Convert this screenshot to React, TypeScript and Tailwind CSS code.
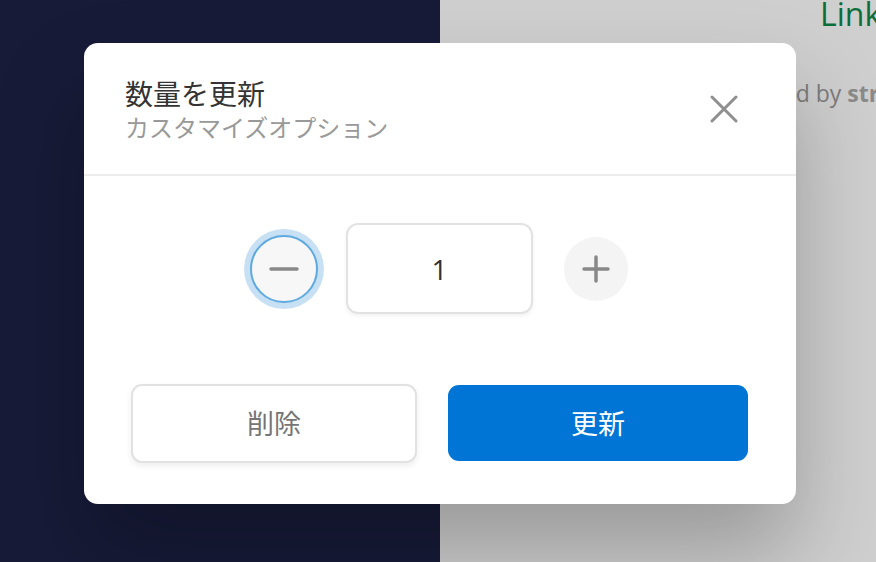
import React, { useState } from 'react';

const jp = { fontFamily: '"Noto Sans CJK JP", "Noto Sans", sans-serif' };
const latin = { fontFamily: '"Open Sans", sans-serif' };

export default function App() {
  const [qty, setQty] = useState(1);

  return (
    <div className="relative w-[876px] h-[562px] overflow-hidden flex" style={jp}>
      {/* Page behind the overlay */}
      <div className="w-[440px] shrink-0 h-full bg-[#171b38]" />
      <div className="flex-1 min-w-0 h-full bg-[#cfcfcf] flex flex-col overflow-hidden">
        <div className="pl-[380px] mt-[-6px] whitespace-nowrap text-[32px] leading-[40px] text-[#0b6e3a]" style={latin}>
          Link
        </div>
        <div className="pl-[275px] mt-[44px] whitespace-nowrap text-[23px] leading-[30px] text-[#7c7c7c]" style={latin}>
          Powered by <span className="font-bold text-[#8a8a8a]">stripe</span>
        </div>
      </div>

      {/* Modal */}
      <div className="absolute left-[84px] top-[43px] w-[712px] h-[461px] bg-white rounded-[14px] shadow-[0_50px_90px_rgba(0,0,0,0.26)] flex flex-col">
        <div className="flex items-start justify-between pl-[41px] pr-[58px] pt-[33px] h-[133px] border-b-2 border-[#ececec]">
          <div className="flex flex-col gap-[2px]">
            <h2 className="text-[28px] leading-[34px] text-[#333333]">数量を更新</h2>
            <p className="text-[24px] leading-[30px] text-[#999999]">カスタマイズオプション</p>
          </div>
          <button className="mt-[19px] w-[28px] h-[28px] flex items-center justify-center" aria-label="閉じる">
            <svg width="28" height="28" viewBox="0 0 28 28" fill="none" stroke="#8f8f8f" strokeWidth="3" strokeLinecap="round">
              <path d="M2 2L26 26M26 2L2 26" />
            </svg>
          </button>
        </div>

        <div className="flex items-center justify-center gap-[28px] mt-[47px] ml-[-2px]">
          <button
            onClick={() => setQty(Math.max(1, qty - 1))}
            className="w-[68px] h-[68px] rounded-full bg-[#f7f7f7] border-2 border-[#5eaae0] ring-[6px] ring-[#c7e0f4] flex items-center justify-center"
            aria-label="減らす"
          >
            <svg width="30" height="4" viewBox="0 0 30 4">
              <path d="M2 2H28" stroke="#888888" strokeWidth="3.5" strokeLinecap="round" />
            </svg>
          </button>
          <div className="w-[187px] h-[91px] rounded-[12px] border-2 border-[#e2e2e2] shadow-[0_2px_4px_rgba(0,0,0,0.06)] flex items-center justify-center text-[28px] text-[#333333]" style={latin}>
            {qty}
          </div>
          <button
            onClick={() => setQty(qty + 1)}
            className="ml-[3px] w-[64px] h-[64px] rounded-full bg-[#f4f4f4] flex items-center justify-center"
            aria-label="増やす"
          >
            <svg width="30" height="30" viewBox="0 0 30 30">
              <path d="M3 15H27M15 3V27" stroke="#888888" strokeWidth="3.5" strokeLinecap="round" />
            </svg>
          </button>
        </div>

        <div className="flex gap-[31px] pl-[47px] pr-[48px] mt-[70px]">
          <button className="w-[286px] h-[79px] rounded-[11px] border-2 border-[#e2e2e2] bg-white shadow-[0_3px_6px_rgba(0,0,0,0.07)] text-[27px] text-[#757575]">
            削除
          </button>
          <button className="flex-1 h-[76px] mt-[1px] rounded-[11px] bg-[#0075d5] text-[27px] text-white">
            更新
          </button>
        </div>
      </div>
    </div>
  );
}
